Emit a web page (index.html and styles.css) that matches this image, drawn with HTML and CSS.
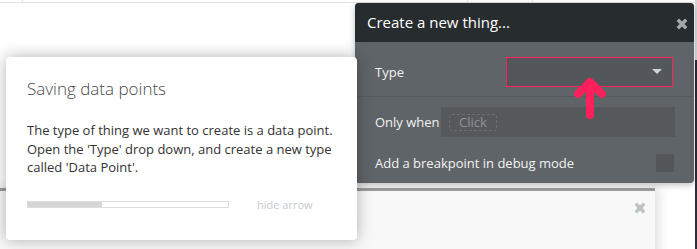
FILE: index.html
```html
<!DOCTYPE html>
<html lang="en">
<head>
    <meta charset="UTF-8">
    <title>Create a new thing</title>
    <link rel="stylesheet" href="styles.css">
</head>
<body>
    <div class="canvas">
        <div class="topline">
            <span class="tick tick-a"></span>
            <span class="tick tick-b"></span>
            <span class="tick tick-c"></span>
        </div>
        <div class="edge-strip"></div>

        <div class="back-panel">
            <div class="back-panel-head">
                <svg class="x-icon back-x" viewBox="0 0 12 12"><path d="M1.8 1.8 L10.2 10.2 M10.2 1.8 L1.8 10.2"/></svg>
            </div>
        </div>

        <div class="modal">
            <div class="modal-header">
                <span class="modal-title">Create a new thing...</span>
                <svg class="x-icon modal-x" viewBox="0 0 12 12"><path d="M1.8 1.8 L10.2 10.2 M10.2 1.8 L1.8 10.2"/></svg>
            </div>
            <div class="modal-row row-type">
                <span class="label">Type</span>
                <div class="dropdown">
                    <span class="caret"></span>
                </div>
            </div>
            <div class="modal-row row-when">
                <span class="label">Only when</span>
                <div class="cond-input">
                    <span class="placeholder">Click</span>
                </div>
            </div>
            <div class="modal-row row-debug">
                <span class="label">Add a breakpoint in debug mode</span>
                <span class="checkbox"></span>
            </div>
        </div>

        <svg class="pointer" viewBox="0 0 32 44">
            <path d="M16 38 L16 6 M4 17 L16 5 L28 17"/>
        </svg>

        <div class="tip-card">
            <h2 class="tip-title">Saving data points</h2>
            <p class="tip-text">The type of thing we want to create is a data point. Open the 'Type' drop down, and create a new type called 'Data Point'.</p>
            <div class="tip-footer">
                <div class="progress"><div class="progress-fill" style="width: 37%"></div></div>
                <span class="hide-arrow">hide arrow</span>
            </div>
        </div>
    </div>
</body>
</html>
```

FILE: styles.css
```css
body {
    margin: 0;
    background: #fff;
    font-family: "Open Sans", "Liberation Sans", sans-serif;
    overflow: hidden;
}
.canvas {
    position: relative;
    width: 697px;
    height: 249px;
    overflow: hidden;
}
.topline {
    height: 2px;
    border-bottom: 1px solid #e3e3e3;
    position: relative;
}
.tick {
    position: absolute;
    top: 0;
    width: 1px;
    height: 3px;
    background: #e3e3e3;
}
.tick-a { left: 22px; }
.tick-b { left: 467px; }
.tick-c { left: 532px; }
.edge-strip {
    position: absolute;
    right: 0;
    top: 0;
    width: 2px;
    height: 249px;
    background: linear-gradient(to bottom, #d8d8d8 0, #d8d8d8 60px, #2e2a3a 60px, #2e2a3a 100%);
}

/* panel behind the popups */
.back-panel {
    position: absolute;
    left: -10px;
    top: 188px;
    width: 665px;
    height: 80px;
    background: #f8f8f8;
    border-top: 3px solid #9b9b9b;
    box-shadow: 4px 0 10px rgba(0, 0, 0, 0.12);
}
.back-panel-head {
    display: flex;
    justify-content: flex-end;
    padding: 11px 9px 0 0;
}
.x-icon {
    width: 12px;
    height: 12px;
    fill: none;
    stroke-width: 3.4;
}
.back-x { stroke: #b9c3c7; }

/* create a new thing popup */
.modal {
    position: absolute;
    left: 355px;
    top: 3px;
    width: 339px;
    height: 180px;
    background: #5f6468;
    border-radius: 4px;
    overflow: hidden;
    box-shadow: 0 2px 6px rgba(0, 0, 0, 0.25);
    color: #f2f2f2;
}
.modal-header {
    height: 39px;
    background: #272c2e;
    display: flex;
    align-items: center;
    justify-content: space-between;
    padding: 0 6px 0 12px;
}
.modal-title {
    font-size: 15px;
    color: #fff;
    margin-top: -2px;
}
.modal-x {
    stroke: #a6aaac;
    margin-top: 3px;
}
.modal-row {
    display: flex;
    align-items: center;
    justify-content: space-between;
    padding-left: 20px;
}
.label {
    font-size: 13px;
}
.row-type {
    padding: 15px 21px 10px 20px;
    box-sizing: border-box;
    height: 55px;
    border-bottom: 1px solid #565b5e;
}
.dropdown {
    width: 167px;
    height: 30px;
    box-sizing: border-box;
    border: 1px solid #ff1f5b;
    background: #53575b;
    display: flex;
    align-items: center;
    justify-content: flex-end;
    padding-right: 10px;
}
.caret {
    width: 0;
    height: 0;
    border-left: 5px solid transparent;
    border-right: 5px solid transparent;
    border-top: 5px solid #c9d3da;
}
.row-when {
    padding: 10px 19px 0 20px;
}
.cond-input {
    width: 234px;
    height: 30px;
    background: #56595c;
    display: flex;
    align-items: center;
    padding-left: 8px;
    box-sizing: border-box;
}
.placeholder {
    font-size: 13px;
    color: #8e9294;
    border: 1px dashed #6a6e71;
    border-radius: 3px;
    padding: 0 9px;
    line-height: 15px;
}
.row-debug {
    padding: 17px 20px 0 20px;
}
.checkbox {
    width: 18px;
    height: 18px;
    background: #53575a;
}

.pointer {
    position: absolute;
    left: 574px;
    top: 77px;
    width: 32px;
    height: 44px;
    fill: none;
    stroke: #ff1f5b;
    stroke-width: 8;
    stroke-linecap: round;
    stroke-linejoin: round;
}

/* walkthrough tooltip */
.tip-card {
    position: absolute;
    left: 6px;
    top: 57px;
    width: 351px;
    height: 183px;
    box-sizing: border-box;
    padding: 20px 21px 0 21px;
    background: #fff;
    border-radius: 4px;
    box-shadow: 0 0 16px rgba(0, 0, 0, 0.3);
}
.tip-title {
    margin: 0;
    font-size: 17px;
    font-weight: 300;
    color: #4a4a4a;
    line-height: 24px;
}
.tip-text {
    margin: 20px 0 0;
    font-size: 13px;
    line-height: 18.5px;
    color: #333;
}
.tip-footer {
    display: flex;
    align-items: center;
    margin-top: 20px;
}
.progress {
    width: 202px;
    height: 7px;
    box-sizing: border-box;
    border: 1px solid #ddd;
    background: #fff;
}
.progress-fill {
    height: 100%;
    background: #d6d6d6;
}
.hide-arrow {
    margin-left: 28px;
    font-size: 11px;
    color: #c3cbcf;
}
```
